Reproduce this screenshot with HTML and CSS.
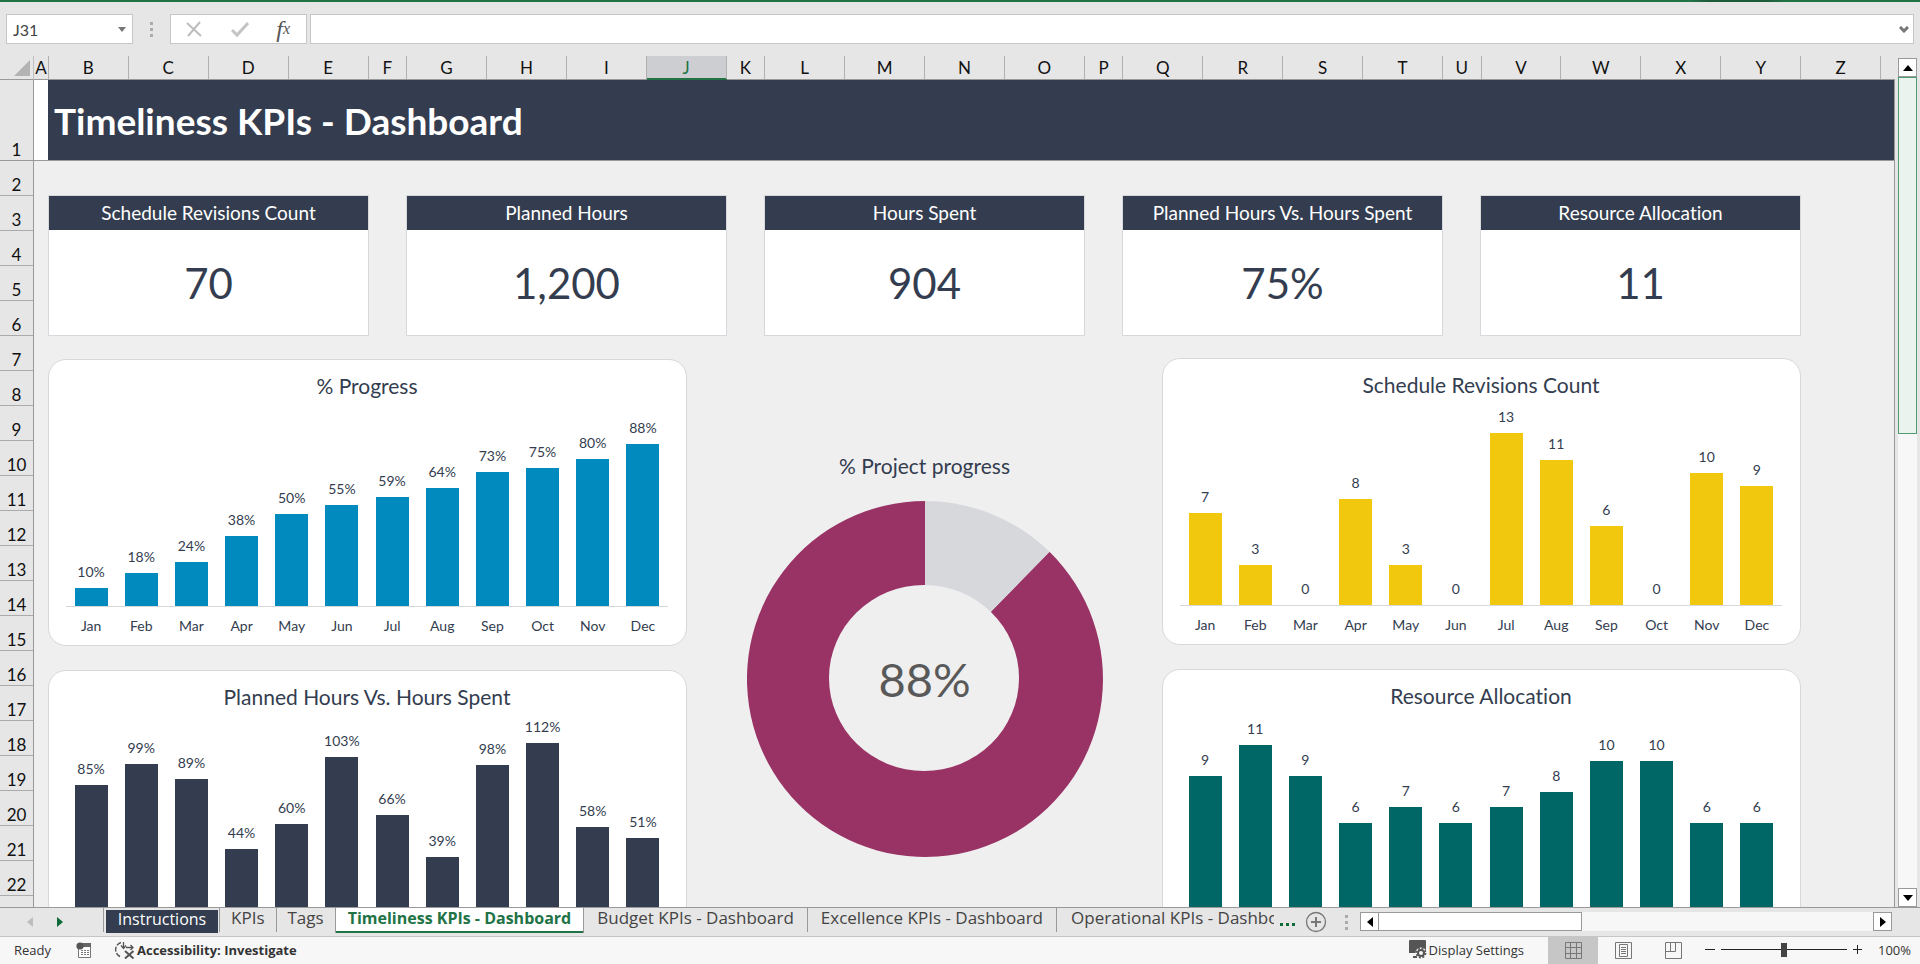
FILE: index.html
```
<!DOCTYPE html>
<html lang="en">
<head>
<meta charset="utf-8">
<title>Timeliness KPIs - Dashboard</title>
<link rel="stylesheet" href="styles.css">
</head>
<body>
<div class="ribbon-edge"></div>

<header class="formula-bar">
  <div class="name-box">
    <input class="name-input" type="text" value="J31" aria-label="Name box">
    <button class="name-drop" type="button" aria-label="Show names"><svg width="8" height="5" viewBox="0 0 8 5"><path d="M0 0h8L4 5z" fill="#777"/></svg></button>
  </div>
  <span class="grip"><i></i><i></i><i></i></span>
  <div class="formula-tools">
    <button type="button" aria-label="Cancel"><svg width="18" height="18" viewBox="0 0 18 18"><path d="M2 3l14 13M15 2L3 16" stroke="#bdbdbd" stroke-width="2" fill="none"/></svg></button>
    <button type="button" aria-label="Enter"><svg width="18" height="18" viewBox="0 0 18 18"><path d="M1 10l5 5L17 3" stroke="#c4c4c4" stroke-width="3" fill="none"/></svg></button>
    <button type="button" class="fx" aria-label="Insert function">f<sub>x</sub></button>
  </div>
  <div class="formula-field">
    <input class="formula-input" type="text" aria-label="Formula">
    <button type="button" class="expand" aria-label="Expand formula bar"><svg width="10" height="7" viewBox="0 0 10 7"><path d="M1 1l4 4 4-4" stroke="#777" stroke-width="3" fill="none"/></svg></button>
  </div>
</header>

<main class="workbook">
  <div class="grid-area">
    <div class="corner"><svg width="16" height="16" viewBox="0 0 16 16"><path d="M16 0v16H0z" fill="#b3b3b3"/></svg></div>
    <div class="col-heads" id="cols"></div>
    <div class="row-heads" id="rows"></div>
    <section class="sheet">
      <div class="banner"><h1>Timeliness KPIs - Dashboard</h1></div>
      <div class="kpis">
        <article class="kpi"><h2>Schedule Revisions Count</h2><p>70</p></article>
        <article class="kpi"><h2>Planned Hours</h2><p>1,200</p></article>
        <article class="kpi"><h2>Hours Spent</h2><p>904</p></article>
        <article class="kpi"><h2>Planned Hours Vs. Hours Spent</h2><p>75%</p></article>
        <article class="kpi"><h2>Resource Allocation</h2><p>11</p></article>
      </div>
      <div class="charts">
        <div class="chart-col left">
          <figure class="chart blue" data-axis="months" data-scale="1.84" data-unit="%" data-values="10,18,24,38,50,55,59,64,73,75,80,88"><figcaption>% Progress</figcaption></figure>
          <figure class="chart navy" data-scale="1.55" data-unit="%" data-values="85,99,89,44,60,103,66,39,98,112,58,51"><figcaption>Planned Hours Vs. Hours Spent</figcaption></figure>
        </div>
        <figure class="donut">
          <figcaption>% Project progress</figcaption>
          <div class="ring">
            <svg viewBox="0 0 356 356" role="img" aria-label="88% complete">
              <path d="M178 178L302.500 50.800A178 178 0 1 1 178 0z" fill="#993366"/>
              <path d="M178 178V0A178 178 0 0 1 302.500 50.800z" fill="#d7d8dc"/>
              <ellipse cx="177" cy="177" rx="95" ry="93" fill="#efefef"/>
            </svg>
            <strong>88%</strong>
          </div>
        </figure>
        <div class="chart-col right">
          <figure class="chart yellow" data-axis="months" data-scale="13.2" data-unit="" data-values="7,3,0,8,3,0,13,11,6,0,10,9"><figcaption>Schedule Revisions Count</figcaption></figure>
          <figure class="chart teal" data-scale="15.5" data-unit="" data-values="9,11,9,6,7,6,7,8,10,10,6,6"><figcaption>Resource Allocation</figcaption></figure>
        </div>
      </div>
    </section>
  </div>
  <div class="vscroll">
    <button type="button" aria-label="Scroll up"><svg width="10" height="6" viewBox="0 0 10 6"><path d="M5 0l5 6H0z"/></svg></button>
    <div class="vtrack"><div class="vthumb"></div></div>
    <button type="button" aria-label="Scroll down"><svg width="10" height="6" viewBox="0 0 10 6"><path d="M0 0h10L5 6z"/></svg></button>
  </div>
</main>

<nav class="tab-bar">
  <div class="tab-nav">
    <button type="button" aria-label="Previous sheets"><svg width="6" height="10" viewBox="0 0 6 10"><path d="M6 0v10L0 5z" fill="#bdbdbd"/></svg></button>
    <button type="button" aria-label="Next sheets"><svg width="6" height="10" viewBox="0 0 6 10"><path d="M0 0v10l6-5z" fill="#0e6b37"/></svg></button>
  </div>
  <div class="tabs">
    <button type="button" class="tab dark"><span>Instructions</span></button>
    <button type="button" class="tab">KPIs</button>
    <button type="button" class="tab last">Tags</button>
    <button type="button" class="tab active">Timeliness KPIs - Dashboard</button>
    <button type="button" class="tab wide">Budget KPIs - Dashboard</button>
    <button type="button" class="tab wide">Excellence KPIs - Dashboard</button>
    <button type="button" class="tab cut">Operational KPIs - Dashboard</button>
  </div>
  <button type="button" class="more" aria-label="More sheets"><i></i><i></i><i></i></button>
  <button type="button" class="add" aria-label="New sheet"><svg width="22" height="22" viewBox="0 0 22 22" fill="none" stroke="#777"><circle cx="11" cy="11" r="9.500" stroke-width="1.300"/><path d="M11 6v10M6 11h10" stroke-width="2"/></svg></button>
  <span class="grip"><i></i><i></i><i></i></span>
  <div class="hscroll">
    <button type="button" aria-label="Scroll left"><svg width="6" height="10" viewBox="0 0 6 10"><path d="M6 0v10L0 5z"/></svg></button>
    <div class="htrack"><div class="hthumb"></div></div>
    <button type="button" aria-label="Scroll right"><svg width="6" height="10" viewBox="0 0 6 10"><path d="M0 0v10l6-5z"/></svg></button>
  </div>
</nav>

<footer class="status">
  <span class="ready">Ready</span>
  <button type="button" class="macro" aria-label="Record macro"><svg width="16" height="16" viewBox="0 0 16 16"><path d="M2.500 5v10.500h12V5" fill="#fff" stroke="#777"/><path d="M6 1h9v4H4z" fill="#666"/><circle cx="4" cy="4" r="3.600" fill="#555"/><path d="M5 8.500h2M8 8.500h2M11 8.500h2M5 10.500h2M8 10.500h2M11 10.500h2M5 12.500h2M8 12.500h2M11 12.500h2" stroke="#777"/></svg></button>
  <button type="button" class="access"><svg width="20" height="18" viewBox="0 0 20 18" fill="none" stroke="#555"><path d="M6 1.500A7.500 7.500 0 0 0 5 15.500" stroke-width="1.400" stroke-dasharray="5 1.500"/><path d="M8.500 1v6M6 4.500l2.500 3 2.500-3M11 6.500h7M15.500 4l2.500 2.500L15.500 9" stroke-width="1.300"/><path d="M10 10l8.500 7.500M18.500 10L10 17.500" stroke-width="2"/></svg>Accessibility: Investigate</button>
  <span class="spacer"></span>
  <button type="button" class="display"><svg width="19" height="19" viewBox="0 0 19 19"><path d="M2 0h15a1 1 0 0 1 1 1v12H1V1a1 1 0 0 1 1-1z" fill="#555"/><path d="M5 16h4v2H5z" fill="#555"/><circle cx="13" cy="13" r="5.500" fill="#f7f7f7"/><circle cx="13" cy="13" r="3" fill="none" stroke="#555" stroke-width="2"/><circle cx="13" cy="13" r="4.600" fill="none" stroke="#555" stroke-width="1.600" stroke-dasharray="2 1.600"/></svg>Display Settings</button>
  <div class="views">
    <button type="button" class="on" aria-label="Normal"><svg width="17" height="17" viewBox="0 0 17 17" fill="none" stroke="#777"><path d="M.5.500h16v16H.5zM5.500.500v16M11.500.500v16M.5 5.500h16M.5 11.500h16"/></svg></button>
    <button type="button" aria-label="Page layout"><svg width="17" height="17" viewBox="0 0 17 17" fill="none" stroke="#777"><path d="M.5.500h16v16H.5zM4.500 2.500h8v12h-8zM6 5.500h5M6 7.500h5M6 9.500h5M6 11.500h5"/></svg></button>
    <button type="button" aria-label="Page break preview"><svg width="17" height="17" viewBox="0 0 17 17" fill="none" stroke="#777"><path d="M.5.500h16v16H.5zM5.500.500v9M.5 9.500h10v-9"/></svg></button>
  </div>
  <div class="zoom">
    <button type="button" aria-label="Zoom out"><svg width="10" height="10" viewBox="0 0 10 10"><path d="M0 4.500h10" stroke="#222"/></svg></button>
    <input type="range" min="10" max="190" value="100" aria-label="Zoom">
    <button type="button" aria-label="Zoom in"><svg width="10" height="10" viewBox="0 0 10 10"><path d="M0 4.500h9M4.500 0v9" stroke="#222"/></svg></button>
    <output>100%</output>
  </div>
</footer>
<script src="app.js"></script>
</body>
</html>
```
FILE: styles.css
```
* { box-sizing: border-box; }
body {
  margin: 0;
  height: 100vh;
  display: flex;
  flex-direction: column;
  overflow: hidden;
  background: #e6e6e6;
  color: #333d4f;
  font-family: Lato, "Liberation Sans", sans-serif;
  font-variant-ligatures: none;
}
h1, h2, p, figure { margin: 0; font-weight: 400; }
button, input {
  font: inherit;
  color: inherit;
  border: 0;
  padding: 0;
  background: none;
}
button { display: flex; align-items: center; justify-content: center; }

.ribbon-edge {
  flex: none;
  height: 2px;
  background: linear-gradient(90deg, #217346 88%, #1d5c3a 89%, #1d5c3a 92%, #217346 93%);
}

/* Formula bar */
.formula-bar {
  flex: none;
  display: flex;
  align-items: center;
  height: 54px;
  padding: 0 6px;
  color: #444;
}
.name-box, .formula-tools, .formula-field {
  display: flex;
  height: 30px;
  background: #fff;
  border: 1px solid #c6c6c6;
}
.name-box { width: 127px; padding: 0 6px; }
.name-input { flex: 1; min-width: 0; font: 16px Lato, sans-serif; }
.grip { display: flex; flex-direction: column; align-items: center; gap: 3px; width: 37px; }
.grip i { width: 3px; height: 3px; background: #ababab; }
.formula-tools { width: 137px; padding-right: 2px; justify-content: space-around; }
.fx { font: italic 24px/24px "Liberation Serif", serif; color: #555; }
.fx sub { font-size: 16px; line-height: 1; }
.formula-field { flex: 1; margin-left: 3px; padding-right: 4px; }
.formula-input { flex: 1; }

/* Grid */
.workbook { flex: 1; min-height: 0; display: flex; }
.grid-area {
  flex: 1;
  min-width: 0;
  display: grid;
  grid-template-columns: 34px minmax(0, 1fr);
  grid-template-rows: 24px minmax(0, 1fr);
  color: #111;
  font-size: 17px;
}
.corner {
  display: flex;
  justify-content: flex-end;
  align-items: flex-end;
  padding: 0 3px 3px 0;
  border-right: 1px solid #c0c0c0;
  border-bottom: 1px solid #999;
}
.col-heads { display: flex; border-bottom: 1px solid #999; line-height: 24px; }
.col-head {
  flex: 80 0 0;
  min-width: 0;
  text-align: center;
  border-right: 1px solid #b0b0b0;
}
.col-head.narrow { flex-grow: 38; }
.col-head.first { flex-grow: 14; }
.col-head.rest { flex-grow: 14; border: 0; }
.col-head.selected { background: #cdced2; color: #217346; box-shadow: inset 0 -1px #217346, 0 1px #217346; }
.row-heads { overflow: hidden; border-right: 1px solid #999; }
.row-head {
  display: flex;
  align-items: flex-end;
  justify-content: center;
  height: 35px;
  line-height: 20px;
  border-bottom: 1px solid #ababab;
}
.row-head.tall { height: 81px; border-color: #999; }

.sheet {
  overflow: hidden;
  background: #efefef;
  border-right: 1px solid #999;
  color: #333d4f;
}
.banner {
  height: 81px;
  padding-left: 14px;
  background: #fff;
  border-bottom: 1px solid #999;
}
.banner h1 {
  height: 80px;
  padding: 0 6px;
  background: #333d4f;
  color: #fff;
  font-size: 37px;
  line-height: 82px;
  font-weight: 700;
}
.kpis {
  display: grid;
  grid-template-columns: repeat(5, minmax(0, 1fr));
  gap: 37px;
  padding: 34px 93px 0 14px;
  text-align: center;
}
.kpi { background: #fff; border: 1px solid #d7d8dc; }
.kpi h2 { background: #333d4f; color: #fff; font-size: 19px; line-height: 34px; }
.kpi p { font-size: 42px; line-height: 103px; padding-top: 2px; }

/* Charts */
.charts {
  display: grid;
  grid-template-columns: 639fr 475fr 639fr;
  padding: 23px 93px 0 14px;
}
.chart-col { display: flex; flex-direction: column; gap: 24px; }
.chart-col.right { margin-top: -1px; }
.chart {
  height: 287px;
  padding: 14px 18px 0 17px;
  background: #fff;
  border: 1px solid #d7d8dc;
  border-radius: 18px;
}
figcaption { font-size: 21px; line-height: 24px; text-align: center; }
.plot {
  display: grid;
  grid-template-columns: repeat(12, minmax(0, 1fr));
  height: 209px;
  border-bottom: 1px solid #d7d8dc;
}
.bar-slot { display: flex; flex-direction: column; align-items: center; justify-content: flex-end; }
.bar-slot span { font-size: 14px; line-height: 20px; padding-bottom: 6px; }
.bar { width: 66%; background: var(--bar); }
.months {
  display: grid;
  grid-template-columns: repeat(12, minmax(0, 1fr));
  font-size: 14px;
  line-height: 37px;
  text-align: center;
}
.blue { --bar: #008abe; }
.navy { --bar: #333d4f; }
.yellow { --bar: #f2c80f; }
.teal { --bar: #006666; }

.donut { display: flex; flex-direction: column; align-items: center; gap: 23px; padding-top: 95px; }
.ring { display: grid; place-items: center; width: 356px; }
.ring > * { grid-area: 1 / 1; }
.ring svg { display: block; width: 100%; }
.ring strong { font-size: 47px; font-weight: 400; color: #595959; }

/* Scrollbars */
.vscroll { width: 25px; padding: 2px 3px 0; display: flex; flex-direction: column; }
.vscroll button, .hscroll button { flex: none; width: 19px; height: 19px; background: #fff; border: 1px solid #999; }
.vtrack { flex: 1; background: #f7f7f7; width: 19px; }
.vthumb { height: 44%; background: #eaf3ee; border: 1px solid #4e9c70; }

/* Sheet tabs */
.tab-bar {
  flex: none;
  display: flex;
  align-items: flex-start;
  height: 30px;
  border-top: 1px solid #999;
  border-bottom: 1px solid #c6c6c6;
  color: #444;
}
.tab-nav { display: flex; width: 103px; height: 28px; padding-left: 27px; gap: 24px; }
.tabs { flex: 1; min-width: 0; display: flex; overflow: hidden; font: 17px/20px "Open Sans", sans-serif; margin-top: -1px; padding-top: 1px; }
.tab { flex: none; height: 24px; padding: 0 11px; align-items: flex-start; white-space: nowrap; }
.tab:not(.active):not(.dark) { border-right: 1px solid #999; }
.tab.dark { padding: 2px 1px 0 2px; border: solid #999; border-width: 0 1px; }
.tab.dark span { background: #333d4f; color: #fff; width: 112px; height: 23px; line-height: 18px; font-size: 16px; }
.tab.tab.last { border-right: 0; }
.tab.active {
  height: 25px;
  padding: 0 12px;
  background: #fff;
  color: #217346;
  font-size: 16px;
  font-weight: 700;
  border: solid #999;
  border-width: 0 1px;
  box-shadow: inset 0 -2px #217346;
}
.tab.wide { padding: 0 13px; }
.tab.tab.cut { flex: 0 1 auto; min-width: 0; overflow: hidden; justify-content: flex-start; padding: 0 0 0 14px; border: 0; }
.more { gap: 3px; width: 26px; height: 22px; align-items: flex-end; padding-bottom: 4px; }
.more i { width: 3px; height: 3px; background: #0e6b37; }
.add { width: 32px; height: 28px; }
.tab-bar .grip { width: 28px; padding-top: 7px; }
.hscroll { display: flex; width: 532px; margin: 4px 28px 0 0; }
.htrack { flex: 1; background: #f7f7f7; }
.hthumb { width: 203px; height: 19px; background: #fff; border: 1px solid #999; border-left: 0; }

/* Status bar */
.status {
  flex: none;
  display: flex;
  align-items: center;
  height: 27px;
  padding: 0 9px 2px 14px;
  background: #f7f7f7;
  color: #333;
  font: 13px "Open Sans", sans-serif;
}
.ready { width: 62px; }
.macro { width: 16px; margin-right: 23px; }
.access { font-weight: 700; gap: 2px; }
.spacer { flex: 1; }
.display { gap: 2px; margin-right: 24px; }
.views { display: flex; height: 27px; margin-bottom: -2px; }
.views button { width: 50px; }
.views .on { background: #c6c6c6; }
.zoom { display: flex; align-items: center; gap: 6px; padding-left: 7px; }
.zoom input { width: 126px; height: 16px; margin: 0; appearance: none; background: linear-gradient(#222, #222) center / 100% 1px no-repeat; }
.zoom input::-webkit-slider-thumb { appearance: none; width: 6px; height: 14px; background: #444; }
.zoom output { width: 42px; text-align: right; }
```
FILE: app.js
```
const narrow = 'FKPU';
const cols = document.getElementById('cols');
for (const c of 'ABCDEFGHIJKLMNOPQRSTUVWXYZ ') {
  const d = document.createElement('div');
  d.className = 'col-head' + (narrow.includes(c) ? ' narrow' : '') + (c === 'A' ? ' first' : '') +
    (c === 'J' ? ' selected' : '') + (c === ' ' ? ' rest' : '');
  d.textContent = c.trim();
  cols.append(d);
}

const rows = document.getElementById('rows');
for (let r = 1; r <= 22; r++) {
  const d = document.createElement('div');
  d.className = 'row-head' + (r === 1 ? ' tall' : '');
  d.textContent = r;
  rows.append(d);
}

const months = ['Jan', 'Feb', 'Mar', 'Apr', 'May', 'Jun', 'Jul', 'Aug', 'Sep', 'Oct', 'Nov', 'Dec'];
for (const chart of document.querySelectorAll('.chart')) {
  const { scale, unit, values } = chart.dataset;
  const plot = document.createElement('div');
  plot.className = 'plot';
  for (const v of values.split(',')) {
    const slot = document.createElement('div');
    slot.className = 'bar-slot';
    slot.innerHTML = `<span>${v}${unit}</span><div class="bar" style="height:${Math.round(v * scale)}px"></div>`;
    plot.append(slot);
  }
  chart.append(plot);
  if (chart.dataset.axis === 'months') {
    const axis = document.createElement('div');
    axis.className = 'months';
    axis.innerHTML = months.map(m => `<span>${m}</span>`).join('');
    chart.append(axis);
  }
}
```
